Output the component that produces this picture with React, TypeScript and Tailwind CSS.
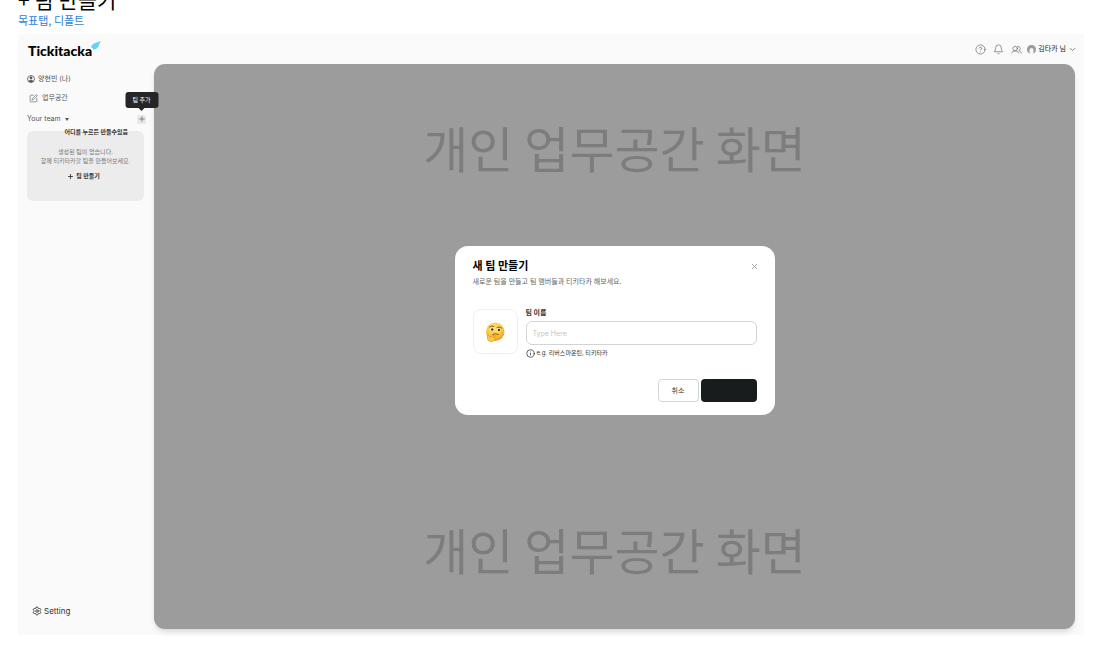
import { Bell, ChevronDown, CircleHelp, Info, Plus, Settings, SquarePen, X } from 'lucide-react';

function Logo() {
  return (
    <div className="flex items-start">
      <span className="font-['Lato','Noto_Sans_CJK_KR',sans-serif] text-[14px] leading-5 font-black text-black">Tickitacka</span>
      <svg viewBox="0 0 20 18" className="-ml-px h-[9px] w-[10px]">
        <path d="M19.5 0 L14 12 Q10 18 5 17 Q4 14 0 12 Q1 7 6 5 Z" fill="#62d3f5" />
      </svg>
    </div>
  );
}

function UserIcon() {
  return (
    <svg viewBox="0 0 16 16" className="size-2">
      <circle cx="8" cy="8" r="7" fill="none" stroke="#555" strokeWidth="1.6" />
      <circle cx="8" cy="6" r="2.8" fill="#555" />
      <path d="M2.5 12 Q8 7.5 13.5 12 Q8 17.5 2.5 12 Z" fill="#555" />
    </svg>
  );
}

function MembersIcon() {
  return (
    <svg viewBox="0 0 24 20" fill="none" stroke="currentColor" strokeWidth="1.5" strokeLinecap="round" className="h-[9px] w-[11px]">
      <circle cx="9" cy="8" r="5" />
      <path d="M1 18 Q3 13 9 13 Q15 13 17 18" />
      <path d="M14 3.5 Q20 2 20.5 8 Q20 11 17 12.5 Q22 14 23 18" />
    </svg>
  );
}

function Avatar() {
  return (
    <svg viewBox="0 0 18 18" className="size-[9px]">
      <circle cx="9" cy="9" r="9" fill="#9a9a9a" />
      <path d="M5 18 V10 Q5 6 9 6 Q13 6 13 10 V18 Z" fill="#f6f6f6" />
    </svg>
  );
}

function ThinkingFace() {
  return (
    <svg viewBox="0 0 40 40" className="size-5">
      <defs>
        <radialGradient id="face" cx="45%" cy="30%" r="70%">
          <stop offset="0" stopColor="#ffe477" />
          <stop offset="0.6" stopColor="#fbc73f" />
          <stop offset="1" stopColor="#e89a25" />
        </radialGradient>
      </defs>
      <circle cx="20.5" cy="19.5" r="18.5" fill="url(#face)" />
      <path d="M9 10 Q13 6 18 9" fill="none" stroke="#8a5a16" strokeWidth="2" strokeLinecap="round" />
      <path d="M24 11 Q28 8 33 12" fill="none" stroke="#8a5a16" strokeWidth="2" strokeLinecap="round" />
      <ellipse cx="14" cy="15" rx="4" ry="3.6" fill="#fff4cf" />
      <ellipse cx="28" cy="16" rx="4" ry="3.6" fill="#fff4cf" />
      <circle cx="14.5" cy="15" r="2.4" fill="#4d3310" />
      <circle cx="28" cy="16" r="2.4" fill="#4d3310" />
      <path d="M15 25 Q20 21 27 25" fill="none" stroke="#8a5a16" strokeWidth="2" strokeLinecap="round" />
      <path
        d="M5 27 Q6 25 8 27 L10 30 L20 26 Q23 26 22 28 L16 31 Q22 31 21 34 Q19 39 12 39 Q6 39 5 34 Z"
        fill="#fcc94a"
        stroke="#d98e1d"
        strokeWidth="1.2"
      />
    </svg>
  );
}

function TopBar() {
  return (
    <header className="flex h-[30px] items-center justify-between pr-[7px] pl-2.5">
      <div className="pt-1">
        <Logo />
      </div>
      <div className="flex items-center gap-[7px] text-[#666]">
        <button aria-label="도움말">
          <CircleHelp size={11} strokeWidth={1.5} />
        </button>
        <button aria-label="알림">
          <Bell size={11} strokeWidth={1.5} />
        </button>
        <button aria-label="멤버">
          <MembersIcon />
        </button>
        <button className="-ml-0.5 flex items-center gap-0.5 text-[7px] leading-3 text-[#222]">
          <Avatar />
          김타카 님
          <ChevronDown size={9} strokeWidth={1.4} />
        </button>
      </div>
    </header>
  );
}

function Sidebar() {
  return (
    <aside className="z-10 flex w-[136px] shrink-0 flex-col pr-2.5 pl-[9px] text-[7px] leading-3 text-[#555]">
      <nav className="mt-[9px] flex flex-col gap-[7px]">
        <a href="#me" className="flex items-center gap-[3px]">
          <UserIcon />
          양현빈 (나)
        </a>
        <a href="#workspace" className="flex items-center gap-1 pl-0.5">
          <SquarePen size={9} strokeWidth={1.6} />
          업무공간
        </a>
      </nav>

      <div className="-mr-0.5 mt-[9px] flex items-center justify-between">
        <button className="flex items-center gap-1">
          Your team
          <svg viewBox="0 0 8 6" className="h-[3px] w-1">
            <path d="M0 0 H8 L4 6 Z" fill="#555" />
          </svg>
        </button>
        <div className="relative">
          <button aria-label="팀 추가" className="flex size-[9px] items-center justify-center rounded-xs bg-[#e8e8e8]">
            <Plus size={8} strokeWidth={2} />
          </button>
          {/* Tooltip */}
          <div className="absolute bottom-full left-1/2 mb-[7px] flex h-4 w-[33px] -translate-x-1/2 items-center justify-center rounded-[3px] bg-[#262626] text-[6px] text-white">
            팀 추가
            <svg viewBox="0 0 8 4" className="absolute top-full h-[3px] w-2">
              <path d="M0 0 H8 L4 4 Z" fill="#262626" />
            </svg>
          </div>
        </div>
      </div>

      <section className="relative mt-1.5 flex h-[70px] flex-col items-center rounded-md bg-[#ececec] pt-4 text-[6px] leading-[9px] text-[#777]">
        <p className="absolute -top-1 right-4 font-bold whitespace-nowrap text-[#333]">어디를 누르든 만들수있음</p>
        <p>생성된 팀이 없습니다.</p>
        <p>함께 티키타카할 팀을 만들어보세요.</p>
        <button className="mt-[5px] flex items-center gap-0.5 pr-1 leading-3 font-bold text-[#333]">
          <Plus size={7} strokeWidth={3} />
          팀 만들기
        </button>
      </section>

      <a href="#setting" className="mt-auto mb-3 flex items-center gap-0.5 pl-[5px] text-[8px] text-[#333]">
        <Settings size={10} strokeWidth={2} />
        Setting
      </a>
    </aside>
  );
}

function CreateTeamDialog() {
  return (
    <form
      role="dialog"
      aria-labelledby="dialog-title"
      className="w-80 rounded-[13px] bg-white px-[18px] pt-3 pb-[13px] text-[7px] leading-3 text-[#333]"
      onSubmit={(e) => e.preventDefault()}
    >
      <div className="flex items-center justify-between">
        <h2 id="dialog-title" className="text-[11px] leading-4 font-bold text-black">새 팀 만들기</h2>
        <button type="button" aria-label="닫기" className="text-[#888]">
          <X size={9} strokeWidth={2} className="-mr-0.5" />
        </button>
      </div>
      <p className="mt-0.5 text-[#666]">새로운 팀을 만들고 팀 멤버들과 티키타카 해보세요.</p>

      <div className="mt-[19px] flex items-start gap-2">
        <button type="button" aria-label="이모지 선택" className="mt-0.5 flex size-[45px] items-center justify-center rounded-lg border border-[#f0f0f0]">
          <ThinkingFace />
        </button>
        <div className="flex flex-1 flex-col">
          <label htmlFor="team-name" className="font-bold">팀 이름</label>
          <input
            id="team-name"
            type="text"
            placeholder="Type Here"
            className="mt-0.5 h-6 w-full rounded-md border border-[#d0d6d8] px-1.5 text-[7px] outline-none placeholder:text-[#c4c4c4]"
          />
          <p className="mt-0.5 flex items-center gap-0.5 text-[6px]">
            <Info size={9} strokeWidth={2} />
            e.g. 리버스마운틴, 티키타카
          </p>
        </div>
      </div>

      <div className="mt-5 flex justify-end gap-0.5">
        <button type="button" className="h-[23px] w-[41px] rounded border border-[#d0d6d8]">취소</button>
        <button type="submit" aria-label="만들기" className="h-[23px] w-14 rounded bg-[#181c1c]" />
      </div>
    </form>
  );
}

export default function App() {
  return (
    <div className="flex min-h-screen flex-col overflow-hidden bg-white pr-[15px] pb-[13px] pl-[18px] font-['Inter','Noto_Sans_CJK_KR',sans-serif]">
      <div className="-mt-[14px] mb-1.5 font-['Noto_Sans_CJK_KR',sans-serif]">
        <h1 className="text-[21px] leading-[26px] text-black">+ 팀 만들기</h1>
        <a href="#goal" className="block text-[11px] leading-4 text-[#2f7fd8]">목표탭, 디폴트</a>
      </div>

      <div className="flex flex-1 flex-col bg-[#fafafa]">
        <TopBar />
        <div className="flex flex-1 pr-[9px] pb-1.5">
          <Sidebar />
          <main className="relative flex flex-1 flex-col items-center justify-between rounded-[11px] bg-[#9c9c9c] pt-[47px] pb-11 font-['Noto_Sans_CJK_KR',sans-serif] text-[49px] leading-[72px] text-[#7d7d7d] shadow-md">
            <p>개인 업무공간 화면</p>
            <p>개인 업무공간 화면</p>
            <div className="absolute inset-0 flex items-center justify-center pb-8 font-['Inter','Noto_Sans_CJK_KR',sans-serif]">
              <CreateTeamDialog />
            </div>
          </main>
        </div>
      </div>
    </div>
  );
}
